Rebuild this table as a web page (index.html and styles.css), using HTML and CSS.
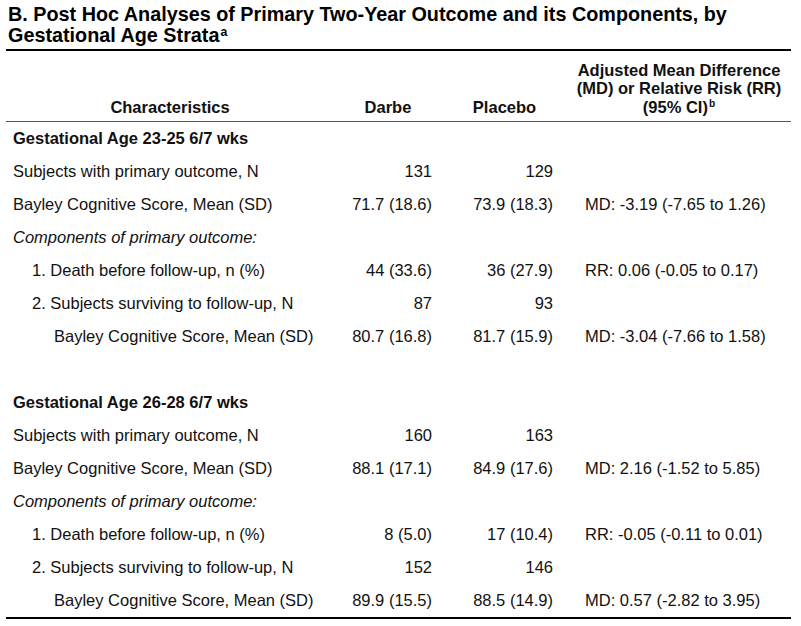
FILE: index.html
```html
<!DOCTYPE html>
<html>
<head>
<meta charset="utf-8">
<link rel="stylesheet" href="styles.css">
</head>
<body>
<div class="page">
  <h1 class="title">B. Post Hoc Analyses of Primary Two-Year Outcome and its Components, by Gestational Age Strata<sup>a</sup></h1>
  <table class="results">
    <colgroup>
      <col class="c-char">
      <col class="c-darbe">
      <col class="c-placebo">
      <col class="c-diff">
    </colgroup>
    <thead>
      <tr>
        <th class="h-char">Characteristics</th>
        <th class="h-num">Darbe</th>
        <th class="h-num">Placebo</th>
        <th class="h-diff">Adjusted Mean Difference (MD) or Relative Risk (RR) (95% CI)<sup>b</sup></th>
      </tr>
    </thead>
    <tbody>
      <tr><td class="lbl group" colspan="4">Gestational Age 23-25 6/7 wks</td></tr>
      <tr><td class="lbl">Subjects with primary outcome, N</td><td class="n1">131</td><td class="n2">129</td><td class="d"></td></tr>
      <tr><td class="lbl">Bayley Cognitive Score, Mean (SD)</td><td class="n1">71.7 (18.6)</td><td class="n2">73.9 (18.3)</td><td class="d">MD: -3.19 (-7.65 to 1.26)</td></tr>
      <tr><td class="lbl ital" colspan="4">Components of primary outcome:</td></tr>
      <tr><td class="lbl ind1">1. Death before follow-up, n (%)</td><td class="n1">44 (33.6)</td><td class="n2">36 (27.9)</td><td class="d">RR: 0.06 (-0.05 to 0.17)</td></tr>
      <tr><td class="lbl ind1">2. Subjects surviving to follow-up, N</td><td class="n1">87</td><td class="n2">93</td><td class="d"></td></tr>
      <tr><td class="lbl ind2">Bayley Cognitive Score, Mean (SD)</td><td class="n1">80.7 (16.8)</td><td class="n2">81.7 (15.9)</td><td class="d">MD: -3.04 (-7.66 to 1.58)</td></tr>
      <tr><td class="lbl" colspan="4">&nbsp;</td></tr>
      <tr><td class="lbl group" colspan="4">Gestational Age 26-28 6/7 wks</td></tr>
      <tr><td class="lbl">Subjects with primary outcome, N</td><td class="n1">160</td><td class="n2">163</td><td class="d"></td></tr>
      <tr><td class="lbl">Bayley Cognitive Score, Mean (SD)</td><td class="n1">88.1 (17.1)</td><td class="n2">84.9 (17.6)</td><td class="d">MD: 2.16 (-1.52 to 5.85)</td></tr>
      <tr><td class="lbl ital" colspan="4">Components of primary outcome:</td></tr>
      <tr><td class="lbl ind1">1. Death before follow-up, n (%)</td><td class="n1">8 (5.0)</td><td class="n2">17 (10.4)</td><td class="d">RR: -0.05 (-0.11 to 0.01)</td></tr>
      <tr><td class="lbl ind1">2. Subjects surviving to follow-up, N</td><td class="n1">152</td><td class="n2">146</td><td class="d"></td></tr>
      <tr class="last"><td class="lbl ind2">Bayley Cognitive Score, Mean (SD)</td><td class="n1">89.9 (15.5)</td><td class="n2">88.5 (14.9)</td><td class="d">MD: 0.57 (-2.82 to 3.95)</td></tr>
    </tbody>
  </table>
</div>
</body>
</html>
```
FILE: styles.css
```css
html, body {
  margin: 0;
  padding: 0;
  background: #ffffff;
}

body {
  font-family: "Liberation Sans", Arial, sans-serif;
  color: #111111;
}

.page {
  padding: 4px 10px 0 6px;
}

.title {
  margin: 0 0 3px 0;
  padding-left: 2px;
  font-size: 19.8px;
  line-height: 21px;
  font-weight: bold;
  color: #000000;
}

.title sup,
.h-diff sup {
  display: inline-block;
  font-size: 0.62em;
  line-height: 1;
  vertical-align: top;
  margin-top: 1px;
  margin-left: 1px;
}

.results {
  width: 785px;
  border-collapse: collapse;
  table-layout: fixed;
  font-size: 16.5px;
  border-top: 2px solid #000000;
  border-bottom: 2px solid #000000;
}

.c-char { width: 328px; }
.c-darbe { width: 119px; }
.c-placebo { width: 114px; }
.c-diff { width: 224px; }

.results th {
  font-weight: bold;
  line-height: 18.5px;
  vertical-align: bottom;
  text-align: center;
  padding: 0 0 5px 0;
  height: 65px;
  border-bottom: 1px solid #555555;
  color: #111111;
}

.results th.h-num {
  padding-right: 11px;
}

.results th.h-diff {
  padding: 0 6px 5px 6px;
}

.results td {
  line-height: 19px;
  padding: 7px 0;
  height: 18.8px;
  white-space: nowrap;
  vertical-align: middle;
}

.results td.lbl {
  padding-left: 7px;
  text-align: left;
}

.results td.group {
  font-weight: bold;
}

.results td.ital {
  font-style: italic;
}

.results td.ind1 {
  padding-left: 26px;
}

.results td.ind2 {
  padding-left: 48px;
}

.results td.n1 {
  text-align: right;
  padding-right: 21px;
}

.results td.n2 {
  text-align: right;
  padding-right: 14px;
}

.results td.d {
  text-align: left;
  padding-left: 18px;
}
```
